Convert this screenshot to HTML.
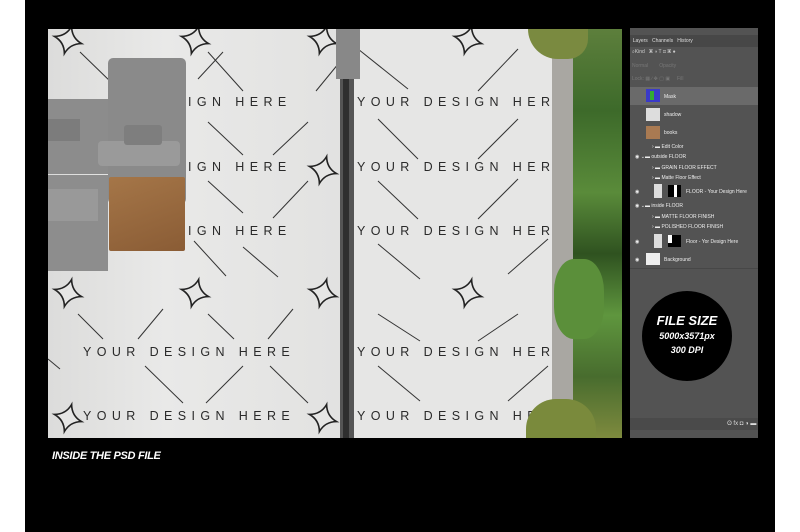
<!DOCTYPE html>
<html><head><style>
body{margin:0;width:800px;height:532px;background:#fff;position:relative;overflow:hidden;font-family:"Liberation Sans",sans-serif}
.a{position:absolute}
.t{position:absolute;font-size:12.5px;letter-spacing:5.4px;color:#2a2a2a;white-space:nowrap}
</style></head><body>
<div class="a" style="left:25px;top:0;width:750px;height:532px;background:#000"></div>
<div class="a" style="left:48px;top:29px;width:574px;height:409px;background:#e6e6e5;overflow:hidden">
 <div class="a" style="left:0;top:0;width:292px;height:409px;background:linear-gradient(90deg,#dcdcdb,#e9e9e8 40%,#e2e2e1)"></div>
 <svg class="a" style="left:0;top:0" width="574" height="409" stroke="#333" stroke-width="1" fill="none">
  <g>
   <line x1="32" y1="23" x2="65" y2="55"/><line x1="175" y1="23" x2="150" y2="50"/>
   <line x1="160" y1="23" x2="195" y2="62"/><line x1="300" y1="23" x2="268" y2="62"/>
   <line x1="160" y1="152" x2="195" y2="184"/><line x1="260" y1="152" x2="225" y2="189"/>
   <line x1="160" y1="93" x2="195" y2="126"/><line x1="260" y1="93" x2="225" y2="126"/>
   <line x1="195" y1="218" x2="230" y2="248"/><line x1="146" y1="212" x2="178" y2="247"/>
   <line x1="30" y1="285" x2="55" y2="310"/><line x1="115" y1="280" x2="90" y2="310"/>
   <line x1="160" y1="285" x2="186" y2="310"/><line x1="245" y1="280" x2="220" y2="310"/>
   <line x1="97" y1="337" x2="135" y2="374"/><line x1="195" y1="337" x2="158" y2="374"/>
   <line x1="222" y1="337" x2="260" y2="374"/><line x1="0" y1="330" x2="12" y2="340"/>
   <line x1="310" y1="20" x2="360" y2="60"/><line x1="470" y1="20" x2="430" y2="62"/>
   <line x1="330" y1="90" x2="370" y2="130"/><line x1="470" y1="90" x2="430" y2="130"/>
   <line x1="330" y1="152" x2="370" y2="190"/><line x1="470" y1="150" x2="430" y2="190"/>
   <line x1="330" y1="215" x2="372" y2="250"/><line x1="500" y1="210" x2="460" y2="245"/>
   <line x1="330" y1="285" x2="372" y2="312"/><line x1="470" y1="285" x2="430" y2="312"/>
   <line x1="330" y1="337" x2="372" y2="372"/><line x1="500" y1="337" x2="460" y2="372"/>
  </g>
  <g stroke="#222" stroke-width="1.6" fill="#e6e6e5">
   <path id="s" d="M0,-14 Q3,-3 14,0 Q3,3 0,14 Q-3,3 -14,0 Q-3,-3 0,-14Z" transform="translate(20,11) rotate(15)"/>
   <path d="M0,-14 Q3,-3 14,0 Q3,3 0,14 Q-3,3 -14,0 Q-3,-3 0,-14Z" transform="translate(147,11) rotate(15)"/>
   <path d="M0,-14 Q3,-3 14,0 Q3,3 0,14 Q-3,3 -14,0 Q-3,-3 0,-14Z" transform="translate(275,11) rotate(15)"/>
   <path d="M0,-14 Q3,-3 14,0 Q3,3 0,14 Q-3,3 -14,0 Q-3,-3 0,-14Z" transform="translate(420,11) rotate(15)"/>
   <path d="M0,-14 Q3,-3 14,0 Q3,3 0,14 Q-3,3 -14,0 Q-3,-3 0,-14Z" transform="translate(275,141) rotate(15)"/>
   <path d="M0,-14 Q3,-3 14,0 Q3,3 0,14 Q-3,3 -14,0 Q-3,-3 0,-14Z" transform="translate(20,264) rotate(15)"/>
   <path d="M0,-14 Q3,-3 14,0 Q3,3 0,14 Q-3,3 -14,0 Q-3,-3 0,-14Z" transform="translate(147,264) rotate(15)"/>
   <path d="M0,-14 Q3,-3 14,0 Q3,3 0,14 Q-3,3 -14,0 Q-3,-3 0,-14Z" transform="translate(275,264) rotate(15)"/>
   <path d="M0,-14 Q3,-3 14,0 Q3,3 0,14 Q-3,3 -14,0 Q-3,-3 0,-14Z" transform="translate(420,264) rotate(15)"/>
   <path d="M0,-14 Q3,-3 14,0 Q3,3 0,14 Q-3,3 -14,0 Q-3,-3 0,-14Z" transform="translate(20,389) rotate(15)"/>
   <path d="M0,-14 Q3,-3 14,0 Q3,3 0,14 Q-3,3 -14,0 Q-3,-3 0,-14Z" transform="translate(275,389) rotate(15)"/>
  </g>
 </svg>
 <div class="t" style="left:140px;top:66px">IGN HERE</div>
 <div class="t" style="left:140px;top:131px">IGN HERE</div>
 <div class="t" style="left:140px;top:195px">IGN HERE</div>
 <div class="t" style="left:35px;top:316px">YOUR DESIGN HERE</div>
 <div class="t" style="left:35px;top:380px">YOUR DESIGN HERE</div>
 <div class="t" style="left:309px;top:66px">YOUR DESIGN HER</div>
 <div class="t" style="left:309px;top:131px">YOUR DESIGN HER</div>
 <div class="t" style="left:309px;top:195px">YOUR DESIGN HER</div>
 <div class="t" style="left:309px;top:316px">YOUR DESIGN HER</div>
 <div class="t" style="left:309px;top:380px">YOUR DESIGN HER</div>
 <!-- sofa -->
 <div class="a" style="left:60px;top:29px;width:78px;height:146px;background:#8a8a8a;border-radius:5px"></div>
 <div class="a" style="left:0;top:70px;width:60px;height:75px;background:#8c8c8c"></div>
 <div class="a" style="left:0;top:146px;width:60px;height:96px;background:#8d8d8d"></div>
 <div class="a" style="left:50px;top:112px;width:82px;height:25px;background:#9a9a9a;border-radius:4px"></div>
 <div class="a" style="left:76px;top:96px;width:38px;height:20px;background:#7e7e7e;border-radius:3px"></div>
 <div class="a" style="left:0;top:90px;width:32px;height:22px;background:#7c7c7c"></div>
 <div class="a" style="left:0;top:160px;width:50px;height:32px;background:#999"></div>
 <div class="a" style="left:61px;top:148px;width:76px;height:74px;background:linear-gradient(160deg,#a57648,#8a5c35);border-radius:2px"></div>
 <!-- divider -->
 <div class="a" style="left:292px;top:0;width:14px;height:409px;background:#555"></div>
 <div class="a" style="left:295px;top:0;width:6px;height:409px;background:#2f2f2f"></div>
 <div class="a" style="left:288px;top:0;width:24px;height:50px;background:#888"></div>
 <!-- gravel & plants -->
 <div class="a" style="left:504px;top:0;width:30px;height:409px;background:#a9a7a2"></div>
 <div class="a" style="left:525px;top:0;width:49px;height:409px;background:linear-gradient(180deg,#5d7f3c,#3d6a2a 20%,#5a8b3a 40%,#2f5220 55%,#5f963e 70%,#486c2e 85%,#7e8a3e)"></div>
 <div class="a" style="left:480px;top:0;width:60px;height:30px;background:#7a8a40;border-radius:0 0 20px 30px"></div>
 <div class="a" style="left:478px;top:370px;width:70px;height:39px;background:#7a8a3c;border-radius:30px 30px 0 0"></div>
 <div class="a" style="left:506px;top:230px;width:50px;height:80px;background:#5b8f3a;border-radius:40%"></div>
</div>
<!-- PS panel -->
<div class="a" style="left:630px;top:28px;width:128px;height:410px;background:#535353">
 <div class="a" style="left:0;top:7px;width:128px;height:12px;background:#474747;font-size:5px;color:#ddd;line-height:12px">&nbsp;&nbsp;Layers&nbsp;&nbsp; Channels&nbsp;&nbsp; History</div>
 <div class="a" style="left:2px;top:21px;width:124px;height:10px;font-size:5px;color:#ccc">&#x2315;Kind &nbsp; ▣ ◑ T ⊡ ▣ ●</div>
 <div class="a" style="left:2px;top:35px;width:124px;height:10px;font-size:5px;color:#777">Normal &nbsp;&nbsp;&nbsp;&nbsp;&nbsp;&nbsp; Opacity</div>
 <div class="a" style="left:2px;top:48px;width:124px;height:10px;font-size:5px;color:#777">Lock: ▦ ∕ ✥ ▢ ▣ &nbsp;&nbsp;&nbsp; Fill</div>
 <div class="a" style="left:0;top:59px;width:128px;height:18px;background:#6a6a6a"></div>
 <div class="a" style="left:16px;top:61px;width:14px;height:13px;background:#3a3ac8"><div class="a" style="left:4px;top:2px;width:4px;height:9px;background:#3a3"></div></div>
 <div class="a" style="left:34px;top:66px;font-size:5px;color:#eee">Mask</div>
 <div class="a" style="left:16px;top:80px;width:14px;height:13px;background:#ddd"></div>
 <div class="a" style="left:34px;top:84px;font-size:5px;color:#eee">shadow</div>
 <div class="a" style="left:16px;top:98px;width:14px;height:13px;background:#a97a52"></div>
 <div class="a" style="left:34px;top:102px;font-size:5px;color:#eee">books</div>
 <div class="a" style="left:22px;top:116px;font-size:5px;color:#eee">› ▬ Edit Color</div>
 <div class="a" style="left:5px;top:126px;font-size:5px;color:#eee">◉ ⌄▬ outside FLOOR</div>
 <div class="a" style="left:22px;top:137px;font-size:5px;color:#eee">› ▬ GRAIN FLOOR EFFECT</div>
 <div class="a" style="left:22px;top:147px;font-size:5px;color:#eee">› ▬ Matte Floor Effect</div>
 <div class="a" style="left:5px;top:161px;font-size:5px;color:#eee">◉</div>
 <div class="a" style="left:24px;top:156px;width:8px;height:14px;background:#ddd"></div>
 <div class="a" style="left:38px;top:157px;width:13px;height:12px;background:#000"><div class="a" style="left:6px;top:0;width:3px;height:12px;background:#fff"></div></div>
 <div class="a" style="left:56px;top:161px;font-size:5px;color:#eee">FLOOR - Your Design Here</div>
 <div class="a" style="left:5px;top:175px;font-size:5px;color:#eee">◉ ⌄▬ inside FLOOR</div>
 <div class="a" style="left:22px;top:186px;font-size:5px;color:#eee">› ▬ MATTE FLOOR FINISH</div>
 <div class="a" style="left:22px;top:196px;font-size:5px;color:#eee">› ▬ POLISHED FLOOR FINISH</div>
 <div class="a" style="left:5px;top:211px;font-size:5px;color:#eee">◉</div>
 <div class="a" style="left:24px;top:206px;width:8px;height:14px;background:#ddd"></div>
 <div class="a" style="left:38px;top:207px;width:13px;height:12px;background:#000"><div class="a" style="left:0;top:0;width:4px;height:8px;background:#fff"></div></div>
 <div class="a" style="left:56px;top:211px;font-size:5px;color:#eee">Floor - Yor Design Here</div>
 <div class="a" style="left:5px;top:229px;font-size:5px;color:#eee">◉</div>
 <div class="a" style="left:16px;top:225px;width:14px;height:12px;background:#eee"></div>
 <div class="a" style="left:34px;top:229px;font-size:5px;color:#eee">Background</div>
 <div class="a" style="left:0;top:240px;width:128px;height:1px;background:#474747"></div>
 <div class="a" style="left:12px;top:263px;width:90px;height:90px;border-radius:50%;background:#000;color:#fff;text-align:center;font-style:italic;font-weight:bold">
  <div style="margin-top:22px;font-size:13px">FILE SIZE</div>
  <div style="font-size:9px;margin-top:3px">5000x3571px</div>
  <div style="font-size:9px;margin-top:4px">300 DPI</div>
 </div>
 <div class="a" style="left:0;top:390px;width:128px;height:12px;background:#4a4a4a;font-size:6px;color:#ddd;text-align:right;line-height:12px">ʘ fx ◘ ◑ ▬&nbsp;</div>
</div>
<div class="a" style="left:52px;top:450px;color:#fff;font-size:11px;font-weight:bold;font-style:italic;letter-spacing:-0.3px">INSIDE THE PSD FILE</div>
</body></html>
